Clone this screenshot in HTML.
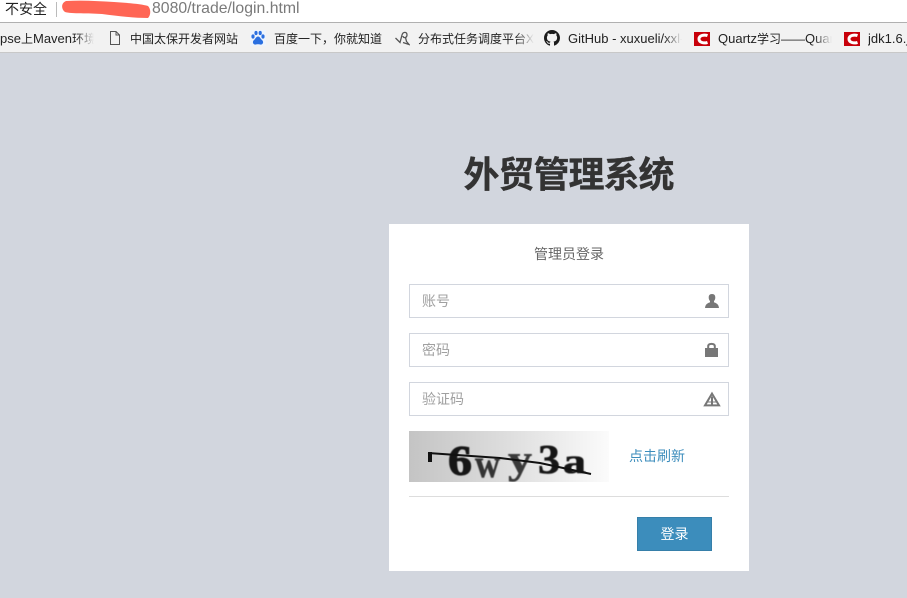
<!DOCTYPE html>
<html lang="zh">
<head>
<meta charset="utf-8">
<title>外贸管理系统</title>
<style>
html,body{margin:0;padding:0;width:907px;height:598px;overflow:hidden;background:#d2d6de;font-family:"Liberation Sans","Noto Sans CJK SC",sans-serif;}
.a{position:absolute;white-space:nowrap;}
#top{left:0;top:0;width:907px;height:22px;background:#fff;}
#bar{left:0;top:22px;width:907px;background:#f2f2f2;border-top:1px solid #b0b0b0;border-bottom:1px solid #c8c8c8;box-sizing:border-box;height:31px;}
.b{font-size:13px;color:#222;top:30px;line-height:17px;overflow:hidden;}
.b i{font-style:normal;font-size:12px;}
.fade{top:24px;height:27px;width:18px;background:linear-gradient(to right,rgba(242,242,242,0),#f2f2f2);}
.input{left:409px;width:320px;height:34px;box-sizing:border-box;border:1px solid #d2d6de;background:#fff;}
.ph{left:422px;font-size:14px;color:#a0a0a0;line-height:20px;}
</style>
</head>
<body>
<div class="a" id="top"></div>
<div class="a" style="left:5px;top:1px;font-size:14px;line-height:16px;color:#222;">不安全</div>
<div class="a" style="left:56px;top:2px;width:1px;height:15px;background:#bbb;"></div>
<div class="a" style="left:152px;top:0;font-size:15.8px;line-height:18px;color:#7a7a7a;">8080/trade/login.html</div>
<svg class="a" style="left:58px;top:0" width="96" height="20"><path d="M8 1C24 0 40 1 56 2C70 3 84 4 90 6C93 9 93 15 90 18C76 18 60 16 44 14C30 13 14 14 7 12C3 9 3 3 8 1Z" fill="#ff6655"/></svg>

<div class="a" id="bar"></div>
<div class="b a" style="left:0;width:94px;">pse<i>上</i>Maven<i>环境</i></div>
<div class="a fade" style="left:76px"></div>
<svg class="a" style="left:108px;top:30px" width="14" height="16" fill="none" stroke="#555"><path d="M2.500 1.500H8L11.500 5V14.500H2.500Z"/><path d="M8 1.500V5H11.500"/></svg>
<div class="b a" style="left:130px;"><i>中国太保开发者网站</i></div>
<svg class="a" style="left:250px;top:30px" width="16" height="16"><rect width="16" height="16" fill="#eef4fc"/><g fill="#2a6fe0"><ellipse cx="3" cy="6.500" rx="1.600" ry="2.100"/><ellipse cx="6" cy="3" rx="1.600" ry="2.100"/><ellipse cx="10.200" cy="3" rx="1.600" ry="2.100"/><ellipse cx="13" cy="6.500" rx="1.600" ry="2.100"/><path d="M8 6.500C10 6.500 10.500 9 12.500 10.500C14 12.500 12.500 15 10 14.500C9 14.200 7 14.200 6 14.500C3.500 15 2 12.500 3.500 10.500C5.500 9 6 6.500 8 6.500Z"/></g></svg>
<div class="b a" style="left:274px;"><i>百度一下，你就知道</i></div>
<svg class="a" style="left:394px;top:30px" width="16" height="16" fill="none" stroke="#555" stroke-width="1.300"><path d="M1.500 8L6 12.500L8 5C9 1.500 13 1.500 13 5C13 8 9 8.500 9 6"/><path d="M11.500 7.500L12.500 11.500L15 14.500L9 12.500"/></svg>
<div class="b a" style="left:418px;width:116px;"><i>分布式任务调度平台X</i></div>
<div class="a fade" style="left:516px"></div>
<svg class="a" style="left:544px;top:30px" width="16" height="16" viewBox="0 0 16 16"><path fill="#1b1b1b" d="M8 0C3.580 0 0 3.580 0 8c0 3.540 2.290 6.530 5.470 7.590.4.070.55-.17.55-.38 0-.19-.01-.82-.01-1.490-2.010.37-2.530-.49-2.690-.94-.09-.23-.48-.94-.82-1.130-.28-.15-.68-.52-.01-.53.63-.01 1.080.58 1.230.82.72 1.210 1.870.87 2.330.66.070-.52.28-.87.51-1.070-1.780-.2-3.640-.89-3.640-3.950 0-.87.31-1.590.82-2.150-.08-.2-.36-1.020.08-2.120 0 0 .67-.21 2.200.82.64-.18 1.320-.27 2-.27s1.360.09 2 .27c1.530-1.040 2.200-.82 2.200-.82.44 1.100.16 1.920.08 2.120.51.56.82 1.270.82 2.150 0 3.070-1.870 3.750-3.650 3.950.29.25.54.73.54 1.480 0 1.070-.01 1.930-.01 2.200 0 .21.15.46.55.38A8.010 8.010 0 0 0 16 8c0-4.420-3.580-8-8-8z"/></svg>
<div class="b a" style="left:568px;width:114px;">GitHub - xuxueli/xxl-job</div>
<div class="a fade" style="left:664px"></div>
<svg class="a" style="left:694px;top:32px" width="16" height="14"><rect width="16" height="14" fill="#c8000a"/><path d="M13.500 3.600C10 2.400 5 3.400 5 7C5 10.600 10 11.600 13.500 10.400" fill="none" stroke="#fff" stroke-width="3"/></svg>
<div class="b a" style="left:718px;width:114px;">Quartz<i>学习——</i>Quartz</div>
<div class="a fade" style="left:814px"></div>
<svg class="a" style="left:844px;top:32px" width="16" height="14"><rect width="16" height="14" fill="#c8000a"/><path d="M13.500 3.600C10 2.400 5 3.400 5 7C5 10.600 10 11.600 13.500 10.400" fill="none" stroke="#fff" stroke-width="3"/></svg>
<div class="b a" style="left:868px;">jdk1.6.j</div>

<div class="a" style="left:389px;width:359px;top:152px;text-align:center;font-size:36px;letter-spacing:-1px;line-height:46px;font-weight:bold;color:#333;-webkit-text-stroke:.3px #333;">外贸管理系统</div>

<div class="a" style="left:389px;top:224px;width:360px;height:347px;background:#fff;"></div>
<div class="a" style="left:389px;width:360px;top:244px;text-align:center;font-size:14px;line-height:20px;color:#666;">管理员登录</div>

<div class="a input" style="top:284px"></div>
<div class="a ph" style="top:291px">账号</div>
<svg class="a" style="left:704px;top:293px" width="16" height="16" fill="#777"><path d="M8 1C5.500 1 4.700 2.600 4.700 4.500C4.700 6 5.200 7.200 6 8V9.300C4 10.200 1.500 10.800 1 15H15C14.500 10.800 12 10.200 10 9.300V8C10.800 7.200 11.300 6 11.300 4.500C11.300 2.600 10.500 1 8 1Z"/></svg>

<div class="a input" style="top:333px"></div>
<div class="a ph" style="top:340px">密码</div>
<svg class="a" style="left:704px;top:342px" width="16" height="16" fill="#777"><path d="M1 6H14V15H1Z"/><path d="M4.200 7V4.300C4.200 2.400 5.700 1.900 7.500 1.900C9.300 1.900 10.800 2.400 10.800 4.300V7" fill="none" stroke="#777" stroke-width="2"/></svg>

<div class="a input" style="top:382px"></div>
<div class="a ph" style="top:389px">验证码</div>
<svg class="a" style="left:703px;top:391px" width="18" height="16"><path d="M9 2.600L16 14.400H2Z" fill="none" stroke="#777" stroke-width="2"/><path d="M9 5.500V14" stroke="#777" stroke-width="2"/><path d="M4 11H14" stroke="#777" stroke-width="1"/></svg>

<svg class="a" style="left:409px;top:431px" width="200" height="51">
<defs><linearGradient id="g" x1="0" x2="1" y1="0" y2="0"><stop offset="0" stop-color="#c4c4c4"/><stop offset="0.5" stop-color="#dedede"/><stop offset="1" stop-color="#fbfbfb"/></linearGradient></defs>
<rect width="200" height="51" fill="url(#g)"/>
<g font-family="Liberation Serif,serif" font-weight="bold" style="filter:blur(.4px)">
<text x="39" y="44" font-size="42" fill="#161616" stroke="#161616" stroke-width="1" textLength="24" lengthAdjust="spacingAndGlyphs">6</text>
<text x="66" y="46" font-size="40" fill="#333" stroke="#333" stroke-width=".5" textLength="25" lengthAdjust="spacingAndGlyphs">w</text>
<text x="99" y="42" font-size="40" fill="#3a3a3a" stroke="#3a3a3a" stroke-width=".5" textLength="24" lengthAdjust="spacingAndGlyphs">y</text>
<text x="129" y="42" font-size="41" fill="#161616" stroke="#161616" stroke-width=".6" textLength="22" lengthAdjust="spacingAndGlyphs">3</text>
<text x="154" y="42" font-size="35" fill="#161616" stroke="#161616" stroke-width=".6" textLength="23" lengthAdjust="spacingAndGlyphs">a</text>
</g>
<path d="M19 22L91 27L131 32L182 43" fill="none" stroke="#111" stroke-width="2"/>
<path d="M21 21V31" fill="none" stroke="#111" stroke-width="4"/>
</svg>
<div class="a" style="left:629px;top:446px;font-size:14px;line-height:20px;color:#3c8dbc;">点击刷新</div>

<div class="a" style="left:409px;top:496px;width:320px;height:1px;background:#ddd;"></div>
<div class="a" style="left:637px;top:517px;width:75px;height:34px;box-sizing:border-box;background:#3c8dbc;border:1px solid #367fa9;color:#fff;font-size:14px;line-height:32px;text-align:center;">登录</div>
</body>
</html>
